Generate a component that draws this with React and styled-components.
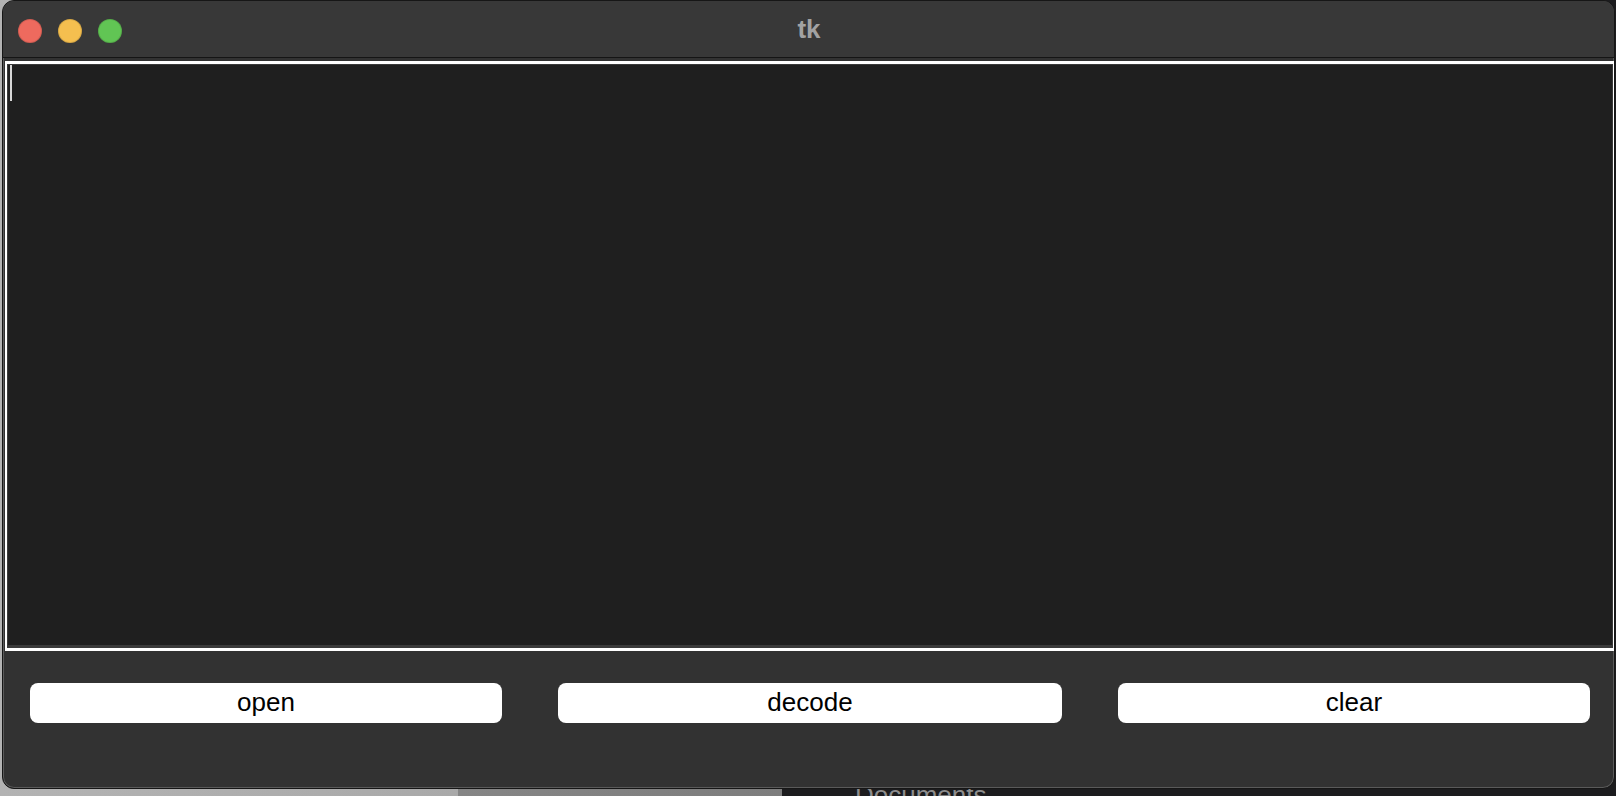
import React from 'react'
import styled, { createGlobalStyle } from 'styled-components'

const GlobalStyle = createGlobalStyle`
    html, body {
        margin: 0;
        padding: 0;
        background: #1c1c1e;
    }
    body {
        font-family: "Liberation Sans", Arial, sans-serif;
    }
`

// the desktop behind the window, gray on the left and dark on the right
const Desktop = styled.div`
    position: relative;
    width: 1616px;
    height: 796px;
    overflow: hidden;
    background: linear-gradient(
        to right,
        #b3b3b3 0px,
        #a9a9a9 458px,
        #858585 458px,
        #7d7d7d 782px,
        #1c1c1e 782px
    );
`

// folder label that peeks out under the window
const DesktopLabel = styled.div`
    position: absolute;
    left: 855px;
    top: 780px;
    font-size: 26px;
    color: #8d8d8d;
`

const Window = styled.div`
    position: relative;
    z-index: 1;
    margin-left: 2px;
    width: 1613px;
    height: 789px;
    box-sizing: border-box;
    border: 1px solid #161616;
    border-radius: 12px;
    box-shadow: inset 0 0 0 1px #5a5a5a;
    background: #323232;
    overflow: hidden;
    display: flex;
    flex-direction: column;
`

const TitleBar = styled.div`
    height: 56px;
    flex-shrink: 0;
    background: #383838;
    border-bottom: 1px solid #151515;
    display: grid;
    grid-template-columns: 1fr auto 1fr;
    align-items: center;
`

const Lights = styled.div`
    display: flex;
    gap: 16px;
    padding-left: 15px;
    padding-top: 3px;
`

const Light = styled.span`
    width: 24px;
    height: 24px;
    border-radius: 50%;
    background: ${props => props.color};
    box-shadow: inset 0 0 0 1px rgba(0, 0, 0, 0.12);
`

const Title = styled.div`
    font-size: 26px;
    font-weight: bold;
    color: #a2a2a2;
    padding-top: 1px;
    margin-left: 1px;
`

// the Text widget: white focus ring with a thin gray inner edge
const TextArea = styled.div`
    position: relative;
    margin: 3px 0 0 2px;
    height: 590px;
    flex-shrink: 0;
    box-sizing: border-box;
    border: 3px solid #ffffff;
    border-left-width: 2px;
    border-right-width: 1px;
    background: #1f1f1f;
    box-shadow: inset 0 0 0 1px #3a3a3a, inset 0 -3px 0 #3a3a3a;
`

const Cursor = styled.span`
    position: absolute;
    left: 3px;
    top: 1px;
    width: 2px;
    height: 36px;
    background: #d8d8d8;
`

const ButtonRow = styled.div`
    display: grid;
    grid-template-columns: 472px 504px 472px;
    column-gap: 56px;
    padding: 32px 0 0 27px;
`

const Btn = styled.button`
    height: 40px;
    border: none;
    border-radius: 8px;
    background: #ffffff;
    color: #000000;
    font-family: "Liberation Sans", Arial, sans-serif;
    font-size: 26px;
    padding: 0 0 2px;
    cursor: pointer;
`

export default function App() {
    return (
        <>
            <GlobalStyle />
            <Desktop>
                <DesktopLabel>Documents</DesktopLabel>
                <Window>
                    <TitleBar>
                        <Lights>
                            <Light color="#ee6a5e" />
                            <Light color="#f5bf4f" />
                            <Light color="#61c554" />
                        </Lights>
                        <Title>tk</Title>
                        <div />
                    </TitleBar>

                    <TextArea>
                        <Cursor />
                    </TextArea>

                    <ButtonRow>
                        <Btn>open</Btn>
                        <Btn>decode</Btn>
                        <Btn>clear</Btn>
                    </ButtonRow>
                </Window>
            </Desktop>
        </>
    )
}
